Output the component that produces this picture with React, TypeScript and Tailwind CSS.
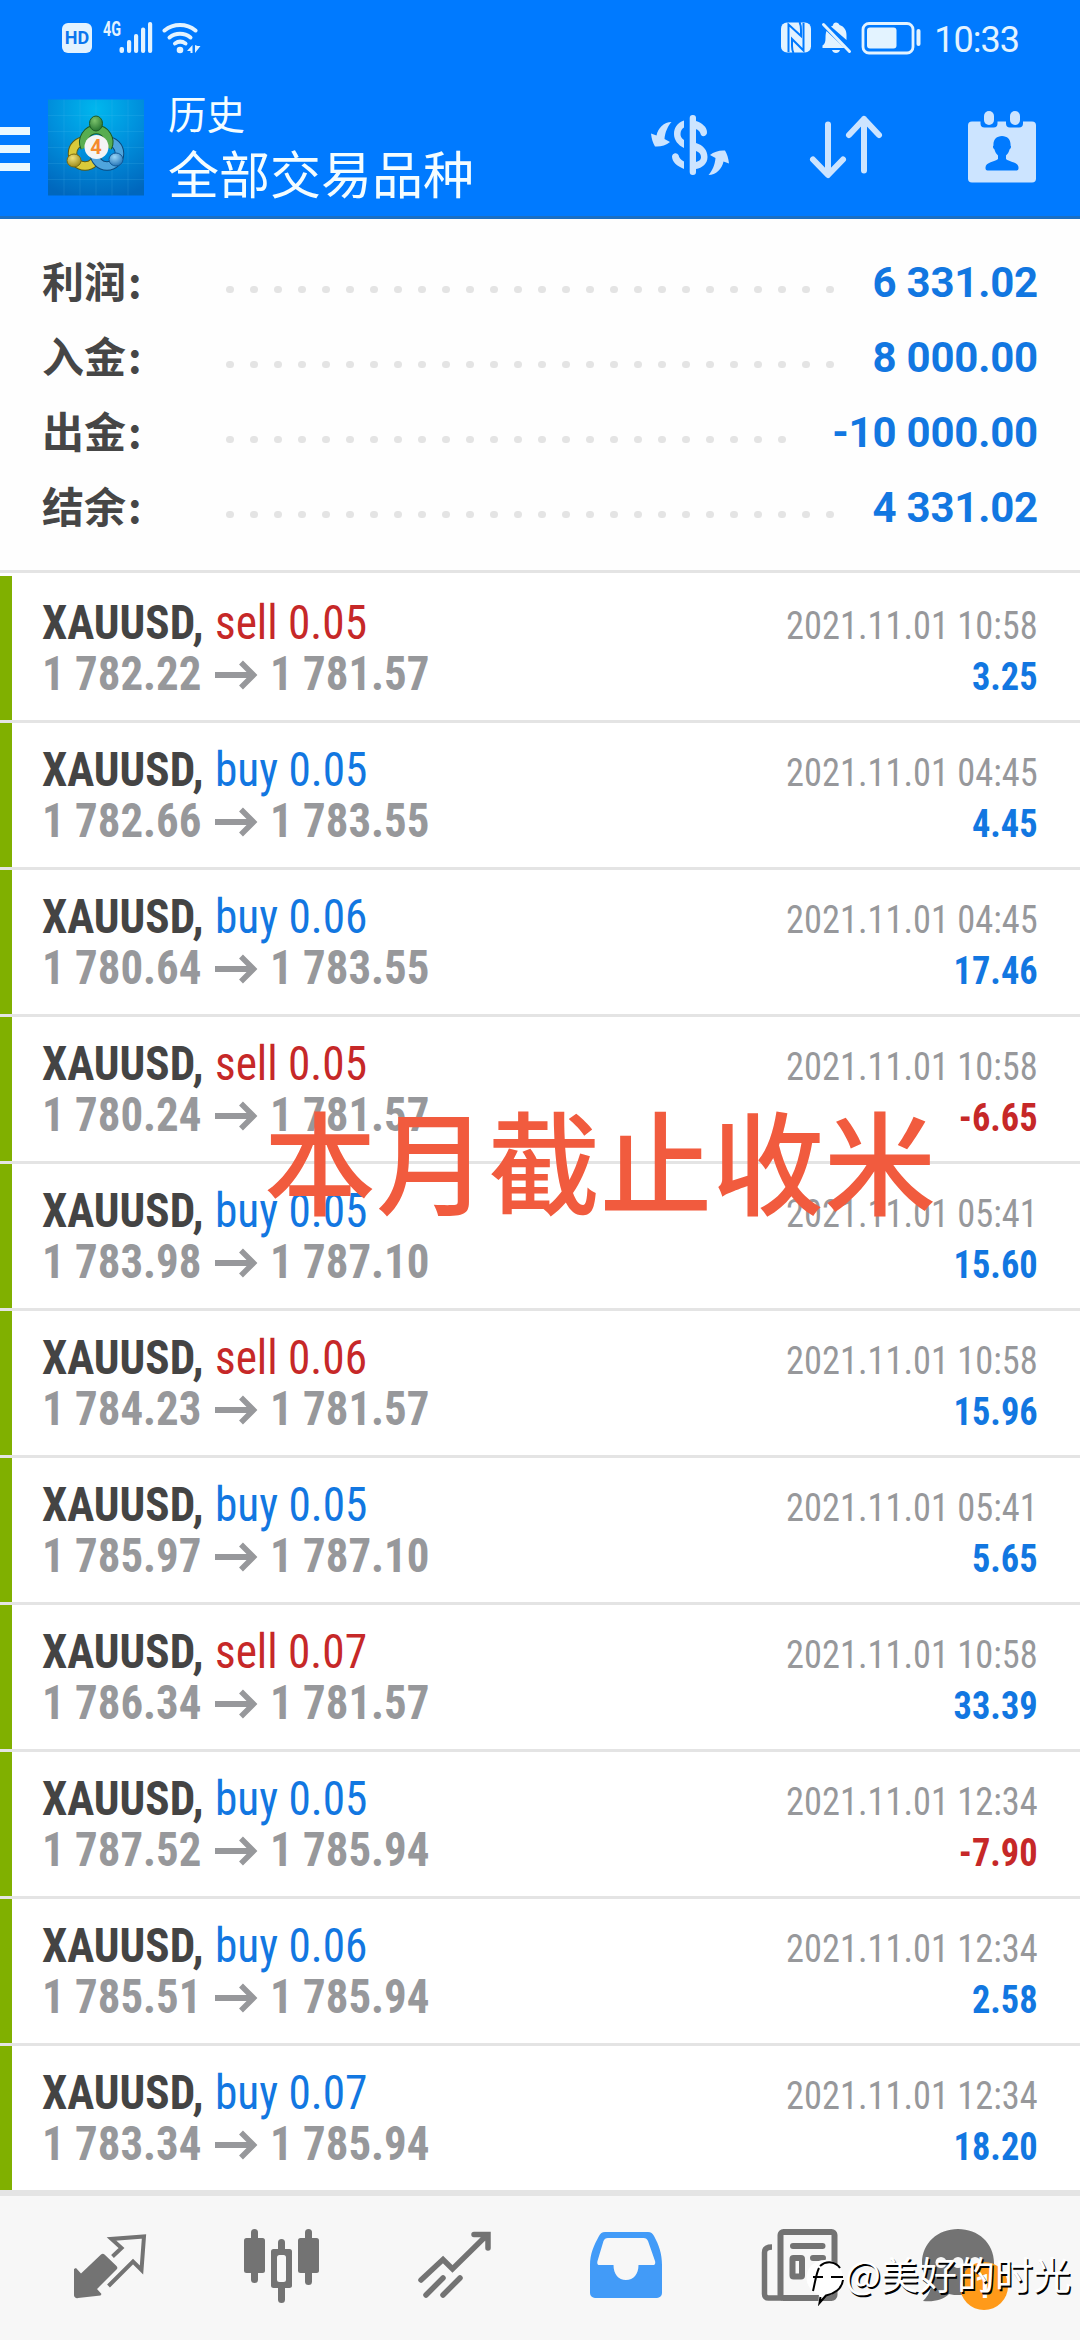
import React from "react";

type Deal = {
    type: "sell" | "buy";
    volume: string;
    open: string;
    close: string;
    time: string;
    profit: string;
};

const deals: Deal[] = [
    { type: "sell", volume: "0.05", open: "1 782.22", close: "1 781.57", time: "2021.11.01 10:58", profit: "3.25" },
    { type: "buy", volume: "0.05", open: "1 782.66", close: "1 783.55", time: "2021.11.01 04:45", profit: "4.45" },
    { type: "buy", volume: "0.06", open: "1 780.64", close: "1 783.55", time: "2021.11.01 04:45", profit: "17.46" },
    { type: "sell", volume: "0.05", open: "1 780.24", close: "1 781.57", time: "2021.11.01 10:58", profit: "-6.65" },
    { type: "buy", volume: "0.05", open: "1 783.98", close: "1 787.10", time: "2021.11.01 05:41", profit: "15.60" },
    { type: "sell", volume: "0.06", open: "1 784.23", close: "1 781.57", time: "2021.11.01 10:58", profit: "15.96" },
    { type: "buy", volume: "0.05", open: "1 785.97", close: "1 787.10", time: "2021.11.01 05:41", profit: "5.65" },
    { type: "sell", volume: "0.07", open: "1 786.34", close: "1 781.57", time: "2021.11.01 10:58", profit: "33.39" },
    { type: "buy", volume: "0.05", open: "1 787.52", close: "1 785.94", time: "2021.11.01 12:34", profit: "-7.90" },
    { type: "buy", volume: "0.06", open: "1 785.51", close: "1 785.94", time: "2021.11.01 12:34", profit: "2.58" },
    { type: "buy", volume: "0.07", open: "1 783.34", close: "1 785.94", time: "2021.11.01 12:34", profit: "18.20" },
];

const totals = [
    { label: "利润", value: "6 331.02", dots: 26 },
    { label: "入金", value: "8 000.00", dots: 26 },
    { label: "出金", value: "-10 000.00", dots: 24 },
    { label: "结余", value: "4 331.02", dots: 26 },
];

const StatusBar: React.FC = () => (
    <div className="flex h-[73px] items-start pl-[62px] pr-[61px] pt-[22px] text-[#e3f3ff]">
        <div className="mt-px flex h-[30px] w-[30px] items-center justify-center rounded-[6px] bg-[#e3f3ff] font-['Roboto'] text-[18px] font-bold leading-none text-[#0b76ee]">
            HD
        </div>
        <span className="ml-[11px] w-[17px] origin-left scale-x-[0.72] font-['Roboto'] text-[20px] font-bold leading-[14px]">4G</span>
        <svg className="h-[32px] w-[34px] -ml-px" viewBox="0 0 34 32" fill="currentColor">
            <rect x="0.5" y="25" width="4.5" height="6" rx="2" />
            <rect x="8" y="18" width="4.2" height="13" rx="2" />
            <rect x="15" y="12" width="4.2" height="19" rx="2" />
            <rect x="22" y="5.500" width="4.2" height="25.500" rx="2" />
            <rect x="29" y="0" width="4.2" height="31" rx="2" />
        </svg>
        <svg className="ml-[9px] h-[32px] w-[40px]" viewBox="0 0 40 32" fill="none" stroke="currentColor" strokeWidth="4" strokeLinecap="round">
            <path d="M2.500 8.500a25 25 0 0 1 31 0" />
            <path d="M7.500 15.500a17 17 0 0 1 21 0" />
            <path d="M13 21.500a9 9 0 0 1 10.500 0" />
            <circle cx="18" cy="28" r="3.300" fill="currentColor" stroke="none" />
            <path d="M30.500 23v8h-2v-2h-3.500zM33 23v8l5.500-7h-3z" fill="currentColor" stroke="none" />
        </svg>
        <svg className="ml-auto h-[32px] w-[32px]" viewBox="0 0 32 32" fill="currentColor">
            <rect x="1" y="0.5" width="30" height="30" rx="6" />
            <path d="M8.500 30V2.500L21 14v-6C21 4 20.500 2 19.500 0M23.500 1v27.500L12 17v7c0 3 .5 5 1.500 7" fill="none" stroke="#007aff" strokeWidth="2" />
        </svg>
        <svg className="ml-[9px] h-[32px] w-[32px]" viewBox="0 0 32 32" fill="currentColor">
            <path d="M12 3.500C12 1.500 13.500.5 15 .5s3 1 3.500 2.500c5 1.500 7 5.500 7 10v5L10 4.500zM5.500 9l18 17H1.500v-2.500C4 22 4.500 19.500 4.500 16c0-3 .2-5 1-7zM11 28h8c-1 4-7 4-8 0z" />
            <path d="M2.500 2.500l26 27" stroke="currentColor" strokeWidth="3" strokeLinecap="round" />
        </svg>
        <svg className="ml-[8px] h-[34px] w-[60px]" viewBox="0 0 60 34" fill="none" stroke="currentColor">
            <rect x="2" y="1.500" width="50" height="29.500" rx="6" strokeWidth="2.800" />
            <rect x="6" y="5.500" width="29.500" height="21" rx="3" fill="currentColor" stroke="none" />
            <path d="M57.500 9v13" strokeWidth="4" strokeLinecap="round" />
        </svg>
        <span className="ml-[13px] font-['Roboto'] text-[36px] leading-[36px] tracking-[-1px]">10:33</span>
    </div>
);

const AppLogo: React.FC = () => (
    <svg className="h-[97px] w-[96px]" viewBox="0 0 96 96">
        <defs>
            <radialGradient id="sky" cx="0.5" cy="0.1" r="0.95">
                <stop offset="0" stopColor="#00b7ee" />
                <stop offset="0.5" stopColor="#008fdc" />
                <stop offset="1" stopColor="#0067bd" />
            </radialGradient>
            <radialGradient id="green" cx="0.4" cy="0.3" r="0.8">
                <stop offset="0" stopColor="#7cc36c" />
                <stop offset="1" stopColor="#1c6b2a" />
            </radialGradient>
            <radialGradient id="gold" cx="0.4" cy="0.3" r="0.8">
                <stop offset="0" stopColor="#f0e27a" />
                <stop offset="1" stopColor="#93800f" />
            </radialGradient>
            <radialGradient id="blue" cx="0.4" cy="0.3" r="0.8">
                <stop offset="0" stopColor="#9ad6f7" />
                <stop offset="1" stopColor="#1769b0" />
            </radialGradient>
        </defs>
        <rect width="96" height="96" fill="url(#sky)" />
        <path d="M16 0v96M32 0v96M48 0v96M64 0v96M80 0v96M0 16h96M0 32h96M0 48h96M0 64h96M0 80h96" stroke="#5cc4f5" strokeOpacity="0.2" strokeWidth="0.8" />
        <circle cx="37" cy="54" r="12.500" fill="none" stroke="#5e5c12" strokeWidth="9.500" />
        <circle cx="37" cy="54" r="12.500" fill="none" stroke="#d9ca3a" strokeWidth="7.500" />
        <circle cx="59" cy="54" r="12.500" fill="none" stroke="#0d4a7d" strokeWidth="9.500" />
        <circle cx="59" cy="54" r="12.500" fill="none" stroke="#4fa5dd" strokeWidth="7.500" />
        <path d="M37 48a12.500 12.500 0 1 1 22.500 0" fill="none" stroke="#1c5a25" strokeWidth="9.500" />
        <path d="M37 48a12.500 12.500 0 1 1 22.500 0" fill="none" stroke="#58ad50" strokeWidth="7.500" />
        <ellipse cx="48" cy="24" rx="6.500" ry="7.500" fill="url(#green)" stroke="#1c5a25" />
        <ellipse cx="26" cy="61" rx="7" ry="6.500" fill="url(#gold)" stroke="#7b6b10" />
        <ellipse cx="68" cy="60" rx="7" ry="6.500" fill="url(#blue)" stroke="#135a98" />
        <circle cx="48.500" cy="47.500" r="12" fill="#f4f4f4" />
        <text x="48" y="54.500" textAnchor="middle" fontFamily="Roboto" fontWeight="700" fontSize="20" fill="#f58a2c">4</text>
    </svg>
);

const AppBar: React.FC = () => (
    <div className="flex h-[146px] items-start border-b-[3px] border-[#1a6fc4] pr-[40px] text-[#cce4ff]">
        <div className="mt-[54px] flex w-[30px] flex-col gap-[10px]">
            <div className="h-[8px] bg-[#eaf8ff]" />
            <div className="h-[8px] bg-[#eaf8ff]" />
            <div className="h-[8px] bg-[#eaf8ff]" />
        </div>
        <div className="ml-[18px] mt-[26px]">
            <AppLogo />
        </div>
        <div className="ml-[24px] mt-[16px] font-['Noto_Sans_CJK_SC',sans-serif] text-[#f4fdff]">
            <div className="text-[38.5px] leading-[46px]">历史</div>
            <div className="mt-[7px] text-[51px] leading-[60px]">全部交易品种</div>
        </div>
        <svg className="ml-auto mt-[27px] h-[90px] w-[100px]" viewBox="0 0 100 90" fill="currentColor">
            <path d="M31.500 22C24 22 18 28 16.500 35.500L11 33.500C11.500 39 13 43 15 46.500C20 47 26 45.500 30 42L24.500 39C25 32 28 26 31.500 22Z" />
            <path d="M31.500 22C24 22 18 28 16.500 35.500L11 33.500C11.500 39 13 43 15 46.500C20 47 26 45.500 30 42L24.500 39C25 32 28 26 31.500 22Z" transform="rotate(180 50 48.5)" />
            <rect x="49.700" y="15" width="6.300" height="60" rx="3" />
            <path d="M44 20.500C37 23 34 28 34 34C34 40 38 45 44 48V40C41 38 40.500 36 40.500 34C40.500 31 42 28.500 44 27.500Z" />
            <path d="M56 21C62 23 67 27 67 32a3.500 3.500 0 0 1-6 3C60 31 58 30 56 29Z" />
            <path d="M56 43C63 45 67.500 50 67.500 57C67.500 64 62 68 56 69V62C60 61 61 59 61 57C61 54 59 52 56 51Z" />
            <path d="M44 69C37 66 32 62 32 56a3.500 3.500 0 0 1 6.500-1C39 58 41 60 44 61.500Z" />
        </svg>
        <svg className="ml-[65px] mt-[39px] h-[70px] w-[82px]" viewBox="0 0 82 70" fill="none" stroke="currentColor" strokeWidth="6" strokeLinecap="round" strokeLinejoin="round">
            <path d="M23 12.500v50M8 47.500l15 15.500 15-15.500" />
            <path d="M59 7v51.500M44 23l15-16 15 16" />
        </svg>
        <svg className="ml-[78px] mt-[37px] h-[75px] w-[75px]" viewBox="0 0 75 75" fill="currentColor">
            <rect x="3" y="11.500" width="68" height="61" rx="4" />
            <path d="M15.500 10.500h17v3a4 4 0 0 1-4 4h-9a4 4 0 0 1-4-4zM41 10.500h17v3a4 4 0 0 1-4 4h-9a4 4 0 0 1-4-4z" fill="#007aff" />
            <rect x="19" y="1" width="10" height="14" rx="5" />
            <rect x="45" y="1" width="10" height="14" rx="5" />
            <path d="M37 26c5.500 0 9 4 8.500 9.500 1 1 .5 3-1 4C44 42 42.500 44 41 45.500v3.500c3 3 12.500 3 12.500 8.500v1a2 2 0 0 1-2 2h-29a2 2 0 0 1-2-2v-1c0-5.500 9.500-5.500 12.500-8.500v-3.500c-1.500-1.500-3-3.500-3.500-6-1.500-1-2-3-1-4C28 30 31.500 26 37 26z" fill="#007aff" />
        </svg>
    </div>
);

const Summary: React.FC = () => (
    <div className="h-[354px] border-b-[3px] border-[#e4e4e4] bg-[#fefefe] pl-[42px] pr-[42px] pt-[26px]">
        {totals.map((row) => (
            <div key={row.label} className="flex h-[75px] items-center">
                <div className="-mt-[6px] flex w-[184px] font-['Noto_Sans_CJK_SC',sans-serif] text-[42px] font-bold leading-[75px] text-[#464646]">
                    {row.label}
                    <span className="ml-[2px]">:</span>
                </div>
                <div className="mt-[14px] flex gap-[16.500px]">
                    {Array.from({ length: row.dots }, (_, i) => (
                        <i key={i} className="h-[7.500px] w-[7.500px] rounded-full bg-[#e4e4e4]" />
                    ))}
                </div>
                <span className="ml-auto font-['Roboto'] text-[42px] font-bold leading-[75px] tracking-[-0.2px] text-[#1277e1]">{row.value}</span>
            </div>
        ))}
    </div>
);

const DealRow: React.FC<{ deal: Deal }> = ({ deal }) => (
    <div className="h-[147px] border-b-[3px] border-[#e4e4e4]">
        <div className="flex h-[144px] justify-between border-l-[12px] border-[#80b000] pl-[30px] pr-[42px] pt-[21px] font-['Roboto_Condensed','Roboto'] font-stretch-condensed">
            <div className="text-[48px] leading-[51px]">
                <div className="flex whitespace-pre">
                    <span className="w-[173px] origin-left scale-x-[0.94] font-bold text-[#444]">XAUUSD,</span>
                    <span className={deal.type === "sell" ? "origin-left scale-x-[0.943] text-[#c62828]" : "origin-left scale-x-[0.943] text-[#1277e1]"}>
                        {deal.type} {deal.volume}
                    </span>
                </div>
                <div className="flex font-bold text-[#97989b]">
                    <span className="w-[173px] origin-left scale-x-[0.935] whitespace-nowrap">{deal.open}</span>
                    <svg className="mt-[12px] h-[30px] w-[43px]" viewBox="0 0 43 30" fill="none" stroke="currentColor" strokeWidth="6">
                        <path d="M0 15h37" />
                        <path d="M26 2.500l12.500 12.500-12.500 12.500" strokeWidth="5.500" />
                    </svg>
                    <span className="ml-[12px] origin-left scale-x-[0.935] whitespace-nowrap">{deal.close}</span>
                </div>
            </div>
            <div className="origin-right scale-x-[0.933] pt-[4px] text-right text-[39px] leading-[51px]">
                <div className="text-[#97989b]">{deal.time}</div>
                <div className={deal.profit.startsWith("-") ? "font-bold text-[#c62828]" : "font-bold text-[#1277e1]"}>{deal.profit}</div>
            </div>
        </div>
    </div>
);

const TabBar: React.FC = () => (
    <div className="flex h-[150px] items-start border-t-[6px] border-[#e4e4e4] bg-[#f7f7f7] px-[24px] pt-[28px] text-[#737373]">
        <div className="flex w-[172px] justify-center">
            <svg className="h-[80px] w-[80px]" viewBox="0 0 80 80" fill="currentColor">
                <path d="M31 30.500a2.500 2.500 0 0 1 3.500 0L46.500 42a2.500 2.500 0 0 1 0 3.500L27 65l4.500 5-1 1.500L8 74a3 3 0 0 1-4-3V45l2-1 5 5.500z" />
                <path d="M42.500 32.500l9-8.500-10-9L74 12.500 71.500 46 63 37.500 38.500 62" fill="none" stroke="currentColor" strokeWidth="4" />
            </svg>
        </div>
        <div className="flex w-[172px] justify-center">
            <svg className="h-[80px] w-[80px]" viewBox="0 0 80 80" fill="currentColor">
                <rect x="9" y="5" width="7" height="54" rx="3.500" />
                <rect x="2" y="14" width="21" height="35" rx="2.500" />
                <rect x="63" y="5" width="7" height="56" rx="3.500" />
                <rect x="56" y="14" width="21" height="35" rx="2.500" />
                <rect x="36" y="15" width="7" height="64" rx="3.500" />
                <rect x="29" y="25" width="21" height="39" rx="2.500" />
                <rect x="35" y="31" width="9" height="27" rx="2.500" fill="#f7f7f7" />
            </svg>
        </div>
        <div className="flex w-[172px] justify-center">
            <svg className="h-[80px] w-[80px]" viewBox="0 0 80 80" fill="none" stroke="currentColor" strokeWidth="5.500" strokeLinecap="round">
                <path d="M7 56l22-20.500 9.500 9.500L73 11M60 10.500h14v13.500" />
                <path d="M12 71l17-17M29 71l17-17" />
            </svg>
        </div>
        <div className="flex w-[172px] justify-center">
            <svg className="h-[80px] w-[80px]" viewBox="0 0 80 80">
                <path fillRule="evenodd" d="M19 8h43c3 0 4.500 1.500 6 4 5 9 8 18 8 29v28a5 5 0 0 1-5 5H9a5 5 0 0 1-5-5V41c0-11 4-20 9-29 1.500-2.500 3-4 6-4zM22 14c-2.500 0-3.500 1-4.500 3L11.500 37c-.6 2.500 0 4 2 4H27.500c0 9 5 15 12.500 15s12.500-6 12.500-15H67c2 0 2.600-1.500 2-4L62 17c-1-2-2-3-4.500-3z" fill="#429bf8" />
            </svg>
        </div>
        <div className="flex w-[172px] justify-center">
            <svg className="h-[80px] w-[80px]" viewBox="0 0 80 80" fill="none" stroke="currentColor" strokeWidth="6">
                <rect x="22.500" y="8" width="54" height="66" rx="3" />
                <path d="M14 23c-4.500 0-7.500 1.500-7.500 5.500V70c0 2.500 1.500 4 4 4h14" strokeWidth="5.500" />
                <path d="M35 22h29.500M55 34h10" strokeLinecap="round" />
                <rect x="34.500" y="34" width="9.500" height="18.500" rx="1" />
            </svg>
        </div>
        <div className="relative flex w-[172px] justify-center">
            <svg className="-ml-[24px] h-[80px] w-[80px]" viewBox="0 0 80 80" fill="currentColor">
                <path d="M40 5c20 0 36 14 36 34S60 71 42 71c-4 0-8 0-11-1-6 6-15 8-26 7 3-3 7-8 8-14C8 57 4 48 4 39 4 19 20 5 40 5z" />
                <circle cx="23" cy="38.500" r="5.500" fill="#f7f7f7" />
                <circle cx="40" cy="38.500" r="5.500" fill="#f7f7f7" />
                <circle cx="57" cy="38.500" r="5.500" fill="#f7f7f7" />
            </svg>
            <div className="absolute left-[76px] top-[38px] flex h-[48px] w-[48px] items-center justify-center rounded-full bg-[#ff9a19] font-['Roboto'] text-[34px] font-medium text-white">
                1
            </div>
        </div>
    </div>
);

const Watermark: React.FC = () => (
    <div className="absolute left-[806px] top-[2256px] flex items-start">
        <svg className="h-[50px] w-[39px]" viewBox="0 0 39 50">
            <path d="M19 4C8 4 .5 12 .5 21.500c0 8 5 14.500 12.500 17L12.500 46 19 39.500C29 39 37 32 37 21.500 37 12 29 4 19 4z" fill="#fff" />
            <path d="M7 21h10M25 21h12M14 10c7-6 16-4 20 2M37 24c-1 9-9 14-17 15.500L13.500 47l1-6M13 12c-3 6-4 15-6 23" fill="none" stroke="#000" strokeWidth="2" />
        </svg>
        <span className="-mt-[8px] font-['Noto_Sans_CJK_SC',sans-serif] text-[38px] leading-[50px] text-white [text-shadow:1.500px_1.500px_0_#000]">@美好的时光</span>
    </div>
);

const App: React.FC = () => {
    return (
        <div className="relative h-[2340px] w-[1080px] overflow-hidden bg-white">
            <header className="bg-[#007aff]">
                <StatusBar />
                <AppBar />
            </header>
            <Summary />
            <main className="pt-[3px]">
                {deals.map((deal, i) => (
                    <DealRow key={i} deal={deal} />
                ))}
            </main>
            <div className="-mt-[3px]">
                <TabBar />
            </div>

            {/* caption over the list */}
            <div className="absolute left-[264px] top-[1078px] whitespace-nowrap font-['Noto_Sans_CJK_SC',sans-serif] text-[112px] font-medium leading-[160px] text-[#f15b3e]">
                本月截止收米
            </div>
            <Watermark />
        </div>
    );
};

export default App;
